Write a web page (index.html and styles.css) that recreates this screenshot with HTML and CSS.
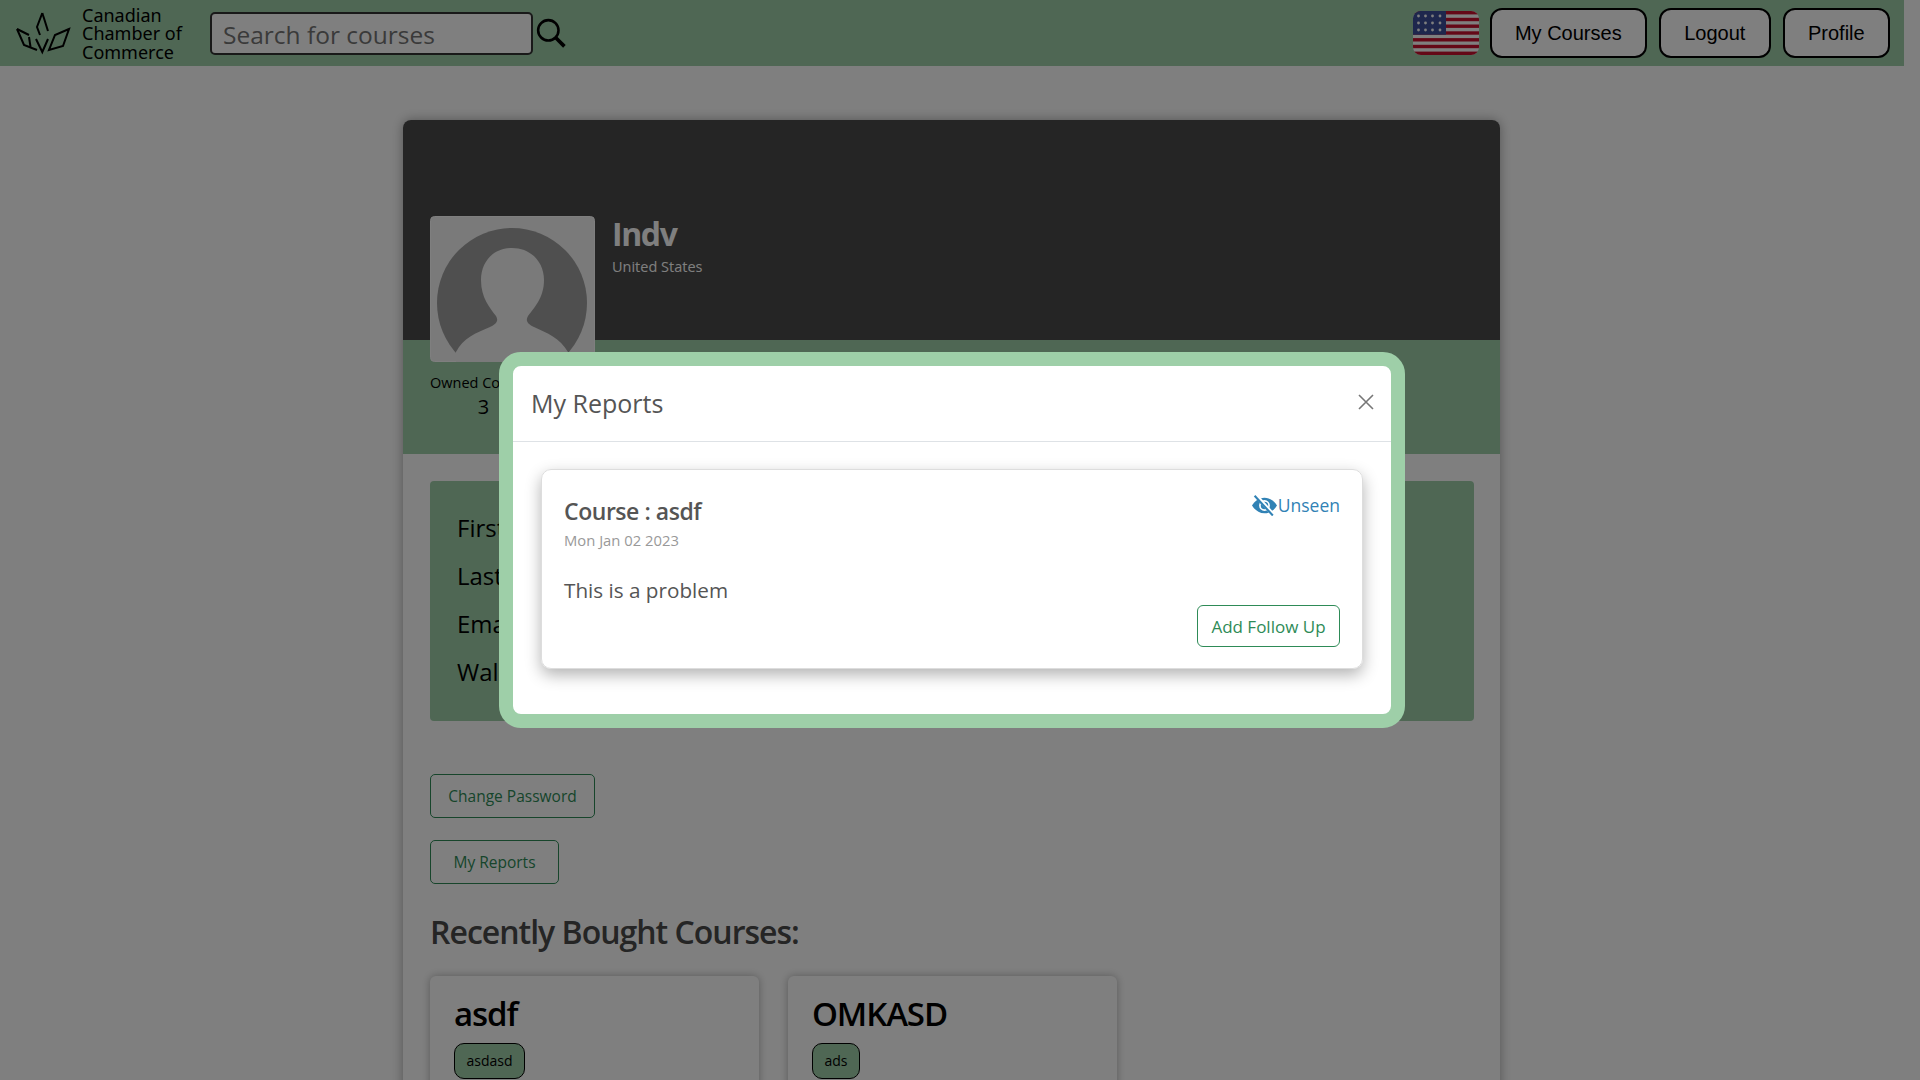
FILE: index.html
```html
<!DOCTYPE html>
<html lang="en">
<head>
    <meta charset="UTF-8">
    <meta name="viewport" content="width=device-width, initial-scale=1.0">
    <title>Profile</title>
    <link rel="stylesheet" href="styles.css">
</head>
<body>
    <nav class="navbar">
        <a class="brand" href="#">
            <svg class="brand-mark" viewBox="0 0 66 50" fill="none" stroke="#000" stroke-width="2">
                <path d="M32.3 5 L27 19 L30 27"/>
                <path d="M32.3 5 L38 23"/>
                <path d="M26 31 L32.3 44 L38 31"/>
                <path d="M7 21 L19 27"/>
                <path d="M7 21 L14 37 L27 42"/>
                <path d="M19 29 L20.5 39"/>
                <path d="M59 21 L45 27 L39 42 L53 38 Z"/>
            </svg>
            <span class="brand-name">Canadian<br>Chamber of<br>Commerce</span>
        </a>
        <input class="search-input" type="text" placeholder="Search for courses">
        <svg class="search-icon" viewBox="0 0 28 28" fill="none" stroke="#000">
            <circle cx="11.5" cy="11.5" r="9.5" stroke-width="2.4"/>
            <path d="M18.5 18.5 L26.5 26.5" stroke-width="3.4"/>
        </svg>
        <div class="nav-right">
            <svg class="flag" viewBox="0 0 66 44">
                <rect width="66" height="44" fill="#fff"/>
                <g fill="#c8102e">
                    <rect y="0" width="66" height="3.4"/>
                    <rect y="6.8" width="66" height="3.4"/>
                    <rect y="13.5" width="66" height="3.4"/>
                    <rect y="20.3" width="66" height="3.4"/>
                    <rect y="27.1" width="66" height="3.4"/>
                    <rect y="33.8" width="66" height="3.4"/>
                    <rect y="40.6" width="66" height="3.4"/>
                </g>
                <rect width="33" height="23.7" fill="#3c4f9a"/>
                <g fill="#fff">
                    <circle cx="5.5" cy="5" r="1.4"/><circle cx="12.5" cy="5" r="1.4"/><circle cx="19.5" cy="5" r="1.4"/><circle cx="27" cy="5" r="1.4"/>
                    <circle cx="5.5" cy="12" r="1.4"/><circle cx="12.5" cy="12" r="1.4"/><circle cx="19.5" cy="12" r="1.4"/><circle cx="27" cy="12" r="1.4"/>
                    <circle cx="5.5" cy="19" r="1.4"/><circle cx="12.5" cy="19" r="1.4"/><circle cx="19.5" cy="19" r="1.4"/><circle cx="27" cy="19" r="1.4"/>
                </g>
            </svg>
            <button class="nav-btn">My Courses</button>
            <button class="nav-btn">Logout</button>
            <button class="nav-btn">Profile</button>
        </div>
    </nav>

    <main class="profile-card">
        <section class="profile-top">
            <svg class="avatar" viewBox="0 0 165 146">
                <rect x="0.5" y="0.5" width="164" height="145" rx="4" fill="#f4f4f4" stroke="#fff"/>
                <circle cx="82" cy="87" r="75" fill="#9e9e9e"/>
                <path d="M82 32 C63 32 51 46 51 64 C51 82 60 92 66 100 C69 105 66 108 60 111 C46 117 33 122 26 136 L26 146 L138 146 L138 136 C130 122 117 117 104 111 C98 108 95 105 98 100 C104 92 114 82 114 64 C114 46 101 32 82 32 Z" fill="#f4f4f4"/>
            </svg>
            <div class="profile-name">
                <h1>Indv</h1>
                <p>United States</p>
            </div>
        </section>

        <section class="profile-stats">
            <div class="stat">
                <span>Owned Courses</span>
                <strong>3</strong>
            </div>
        </section>

        <div class="profile-body">
            <div class="info-panel">
                <p>First Name :</p>
                <p>Last Name :</p>
                <p>Email :</p>
                <p>Wallet :</p>
            </div>

            <button class="btn-outline btn-password">Change Password</button>
            <button class="btn-outline btn-reports">My Reports</button>

            <h2>Recently Bought Courses:</h2>

            <div class="course-row">
                <article class="course-card">
                    <h3>asdf</h3>
                    <span class="tag">asdasd</span>
                </article>
                <article class="course-card">
                    <h3>OMKASD</h3>
                    <span class="tag">ads</span>
                </article>
            </div>
        </div>
    </main>

    <div class="backdrop"></div>

    <div class="modal">
        <header class="modal-header">
            <h4>My Reports</h4>
            <svg class="modal-close" viewBox="0 0 16 16" fill="none" stroke="#777" stroke-width="1.6">
                <path d="M1 1 L15 15 M15 1 L1 15"/>
            </svg>
        </header>
        <div class="modal-body">
            <article class="report">
                <div class="report-head">
                    <div>
                        <h5>Course : asdf</h5>
                        <small>Mon Jan 02 2023</small>
                    </div>
                    <span class="seen">
                        <svg class="seen-icon" viewBox="0 0 24 20">
                            <path d="M12 2.5 C17.5 2.5 21.5 6 24 10 C21.5 14 17.5 17.5 12 17.5 C6.5 17.5 2.5 14 0 10 C2.5 6 6.5 2.5 12 2.5 Z" fill="#3182b5"/>
                            <circle cx="12" cy="10" r="4.4" fill="#3182b5" stroke="#fff" stroke-width="1.6"/>
                            <path d="M4 0.5 L21 19.5" stroke="#fff" stroke-width="3.6"/>
                            <path d="M2.5 0.6 L20 19.6" stroke="#3182b5" stroke-width="2"/>
                        </svg>Unseen
                    </span>
                </div>
                <p class="report-text">This is a problem</p>
                <div class="report-foot">
                    <button class="btn-follow">Add Follow Up</button>
                </div>
            </article>
        </div>
    </div>
</body>
</html>
```

FILE: styles.css
```css
* {
    box-sizing: border-box;
}

html {
    overflow: hidden;
}

body {
    margin: 0;
    height: 1080px;
    padding-right: 16px;
    overflow: hidden;
    font-family: "Open Sans", "Noto Sans", sans-serif;
    background-color: #fff;
    color: #000;
}

h1, h2, h3, h4, h5, p {
    margin: 0;
}

/* navbar */
.navbar {
    display: flex;
    align-items: center;
    height: 66px;
    padding: 0 14px 0 10px;
    background-color: #9ecea9;
}

.brand {
    display: flex;
    align-items: center;
    width: 200px;
    color: #000;
    text-decoration: none;
}

.brand-mark {
    width: 66px;
    height: 50px;
    margin-right: 6px;
    flex-shrink: 0;
}

.brand-name {
    padding-top: 1px;
    font-family: "Noto Sans", sans-serif;
    font-size: 18px;
    line-height: 18.5px;
    white-space: nowrap;
}

.search-input {
    width: 323px;
    height: 43px;
    padding: 2px 11px 0;
    border: 2px solid #333;
    border-radius: 5px;
    background-color: #fff;
    font-family: "Open Sans", sans-serif;
    font-size: 24.5px;
}

.search-input::placeholder {
    color: #757575;
}

.search-icon {
    width: 30px;
    height: 30px;
    margin-left: 3px;
}

.nav-right {
    display: flex;
    align-items: center;
    margin-left: auto;
}

.flag {
    width: 66px;
    height: 44px;
    margin-right: 11px;
    border-radius: 8px;
}

.nav-btn {
    height: 50px;
    margin-left: 12px;
    padding: 0 23.3px;
    border: 2px solid #000;
    border-radius: 12px;
    background-color: #fff;
    font-family: "Liberation Sans", Arial, sans-serif;
    font-size: 20px;
    color: #000;
}

.flag + .nav-btn {
    margin-left: 0;
}

/* profile card */
.profile-card {
    width: 1097px;
    margin: 54px 0 0 403px;
    border-radius: 8px;
    background-color: #fff;
    box-shadow: 0 0 12px rgba(0, 0, 0, 0.35);
}

.profile-top {
    display: flex;
    height: 220px;
    padding: 96px 0 0 27px;
    border-radius: 8px 8px 0 0;
    background-color: #4a4a4a;
}

.avatar {
    width: 165px;
    height: 146px;
    flex-shrink: 0;
}

.profile-name {
    margin-left: 17px;
    color: #fff;
}

.profile-name h1 {
    font-size: 32px;
    font-weight: 700;
    letter-spacing: -1.4px;
    line-height: 36px;
}

.profile-name p {
    margin-top: 5px;
    font-size: 14.5px;
    line-height: 20px;
}

.profile-stats {
    height: 114px;
    padding: 31px 0 0 27px;
    background-color: #9ecea9;
}

.stat {
    display: inline-flex;
    flex-direction: column;
    align-items: center;
}

.stat span {
    font-size: 14.5px;
    line-height: 20px;
}

.stat strong {
    font-size: 20px;
    font-weight: 400;
    line-height: 28px;
}

.profile-body {
    padding: 27px 26px 27px 27px;
}

.info-panel {
    height: 240px;
    margin-bottom: 53px;
    padding: 23px 27px;
    border-radius: 4px;
    background-color: #9ecea9;
}

.info-panel p {
    font-size: 24px;
    line-height: 48px;
}

.btn-outline {
    display: block;
    height: 44px;
    border: 1px solid #2e8b57;
    border-radius: 5px;
    background-color: #fff;
    font-family: "Open Sans", sans-serif;
    font-size: 15.5px;
    color: #2e8b57;
}

.btn-password {
    width: 165px;
    margin-bottom: 22px;
}

.btn-reports {
    width: 129px;
}

.profile-body h2 {
    margin-top: 24px;
    font-size: 32px;
    font-weight: 600;
    letter-spacing: -1px;
    line-height: 47px;
    color: #4a4a4a;
}

.course-row {
    display: flex;
    gap: 29px;
    margin-top: 21px;
}

.course-card {
    width: 329px;
    height: 200px;
    padding: 15px 24px;
    border-radius: 6px;
    box-shadow: 0 0 8px rgba(0, 0, 0, 0.3);
}

.course-card h3 {
    font-size: 33px;
    font-weight: 600;
    letter-spacing: -1.1px;
    line-height: 45px;
}

.tag {
    display: inline-block;
    margin-top: 7px;
    padding: 7px 11.5px;
    border: 1px solid #000;
    border-radius: 10px;
    background-color: #9ecea9;
    font-size: 14px;
    line-height: 20px;
}

/* modal */
.backdrop {
    position: fixed;
    inset: 0;
    background-color: rgba(0, 0, 0, 0.5);
}

.modal {
    position: fixed;
    top: 352px;
    left: 499px;
    width: 906px;
    height: 376px;
    border: 14px solid #9ecfa8;
    border-radius: 22px;
    background-color: #fff;
    color: #555;
}

.modal-header {
    display: flex;
    align-items: center;
    justify-content: space-between;
    height: 76px;
    padding: 0 17px 2px 18px;
    border-bottom: 1px solid #dee2e6;
}

.modal-header h4 {
    font-size: 25px;
    font-weight: 400;
}

.modal-close {
    width: 16px;
    height: 16px;
    margin-bottom: 2px;
}

.modal-body {
    padding: 27px 28px 0;
}

.report {
    height: 200px;
    padding: 26px 22px 0;
    border: 1px solid #ddd;
    border-radius: 10px;
    box-shadow: 0 6px 16px rgba(0, 0, 0, 0.3);
}

.report-head {
    display: flex;
    justify-content: space-between;
}

.report-head h5 {
    font-size: 23px;
    font-weight: 600;
    letter-spacing: -0.45px;
    line-height: 30px;
}

.report-head small {
    display: block;
    margin-top: 4px;
    font-size: 14.8px;
    line-height: 20px;
    color: #999;
}

.seen {
    display: flex;
    align-items: center;
    height: 24px;
    margin-top: -3px;
    font-size: 17.5px;
    color: #3182b5;
}

.seen-icon {
    width: 25px;
    height: 21px;
    margin-right: 1px;
}

.report-text {
    margin-top: 26px;
    font-size: 20.7px;
    line-height: 28px;
}

.report-foot {
    display: flex;
    justify-content: flex-end;
    margin-top: 1px;
}

.btn-follow {
    width: 143px;
    height: 42px;
    border: 1px solid #2e8b57;
    border-radius: 6px;
    background-color: #fff;
    font-family: "Open Sans", sans-serif;
    font-size: 17px;
    color: #2e8b57;
}
```
